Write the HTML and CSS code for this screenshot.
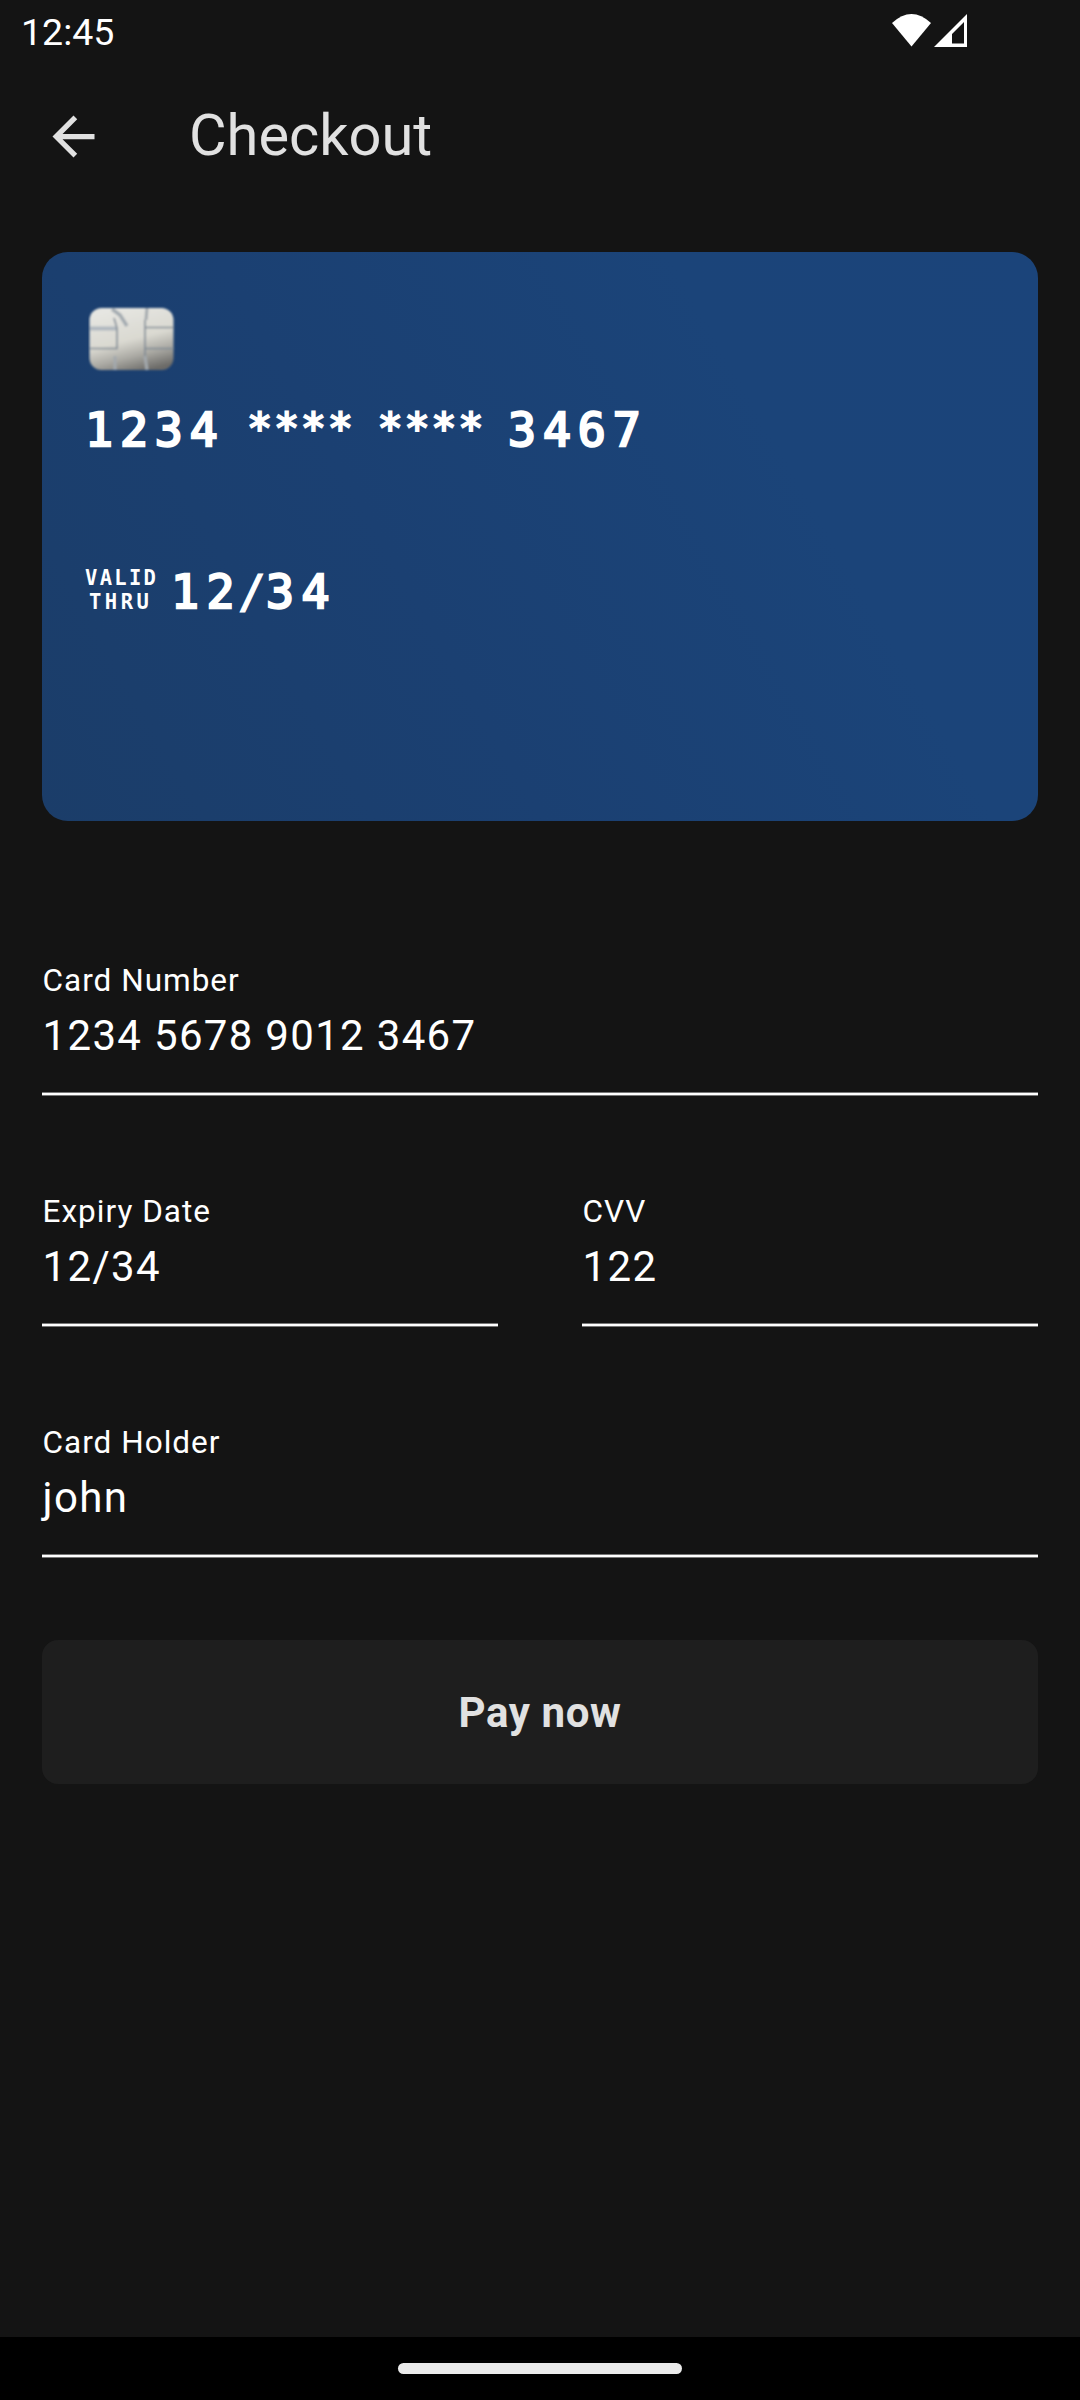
FILE: index.html
```
<!DOCTYPE html>
<html lang="en">
<head>
<meta charset="utf-8">
<title>Checkout</title>
<link rel="stylesheet" href="styles.css">
</head>
<body>
<div class="screen">
  <header class="status">
    <span class="clock">12:45</span>
    <svg class="signals" viewBox="0 0 76 34" width="76" height="34">
      <path d="M0 9Q19.5-9 39 9L19.5 32.5Z" fill="#fff"/>
      <path fill-rule="evenodd" d="M75 0V33H42ZM72 8L60 20V29.500H72Z" fill="#fff"/>
    </svg>
  </header>
  <div class="appbar">
    <svg class="back" viewBox="0 0 24 24" width="63" height="63"><path fill="#e1e1e1" d="M20 11H7.830l5.590-5.590L12 4l-8 8 8 8 1.410-1.410L7.830 13H20z"/></svg>
    <h1 class="title">Checkout</h1>
  </div>
  <main class="content">
    <section class="card">
      <svg class="chip" viewBox="0 0 88 66" width="88" height="66">
        <defs>
          <linearGradient id="metal" x1=".35" y1="0" x2=".7" y2="1">
            <stop offset="0" stop-color="#e6e6e2"/><stop offset=".5" stop-color="#dad9d1"/><stop offset=".75" stop-color="#aaa9a3"/><stop offset="1" stop-color="#6c6b68"/>
          </linearGradient>
          <filter id="soft"><feGaussianBlur stdDeviation=".9"/></filter>
        </defs>
        <g filter="url(#soft)">
          <rect x="1.500" y="2" width="84" height="62" rx="12" fill="url(#metal)"/>
          <g fill="none" stroke="#7f8a95" stroke-width="1.600">
            <path d="M2 22.500H29" stroke="#b0b8bf" stroke-width="4"/>
            <path d="M2 42.500H29V22L26 12M57 21.500H86M57 42.500H86M57 14V50"/>
            <path d="M27 50V64M59 2L58 14M57 50L59 64" stroke="#a3a9ad" stroke-width="3"/>
            <path d="M24 3L32 9L39 20" stroke="#a3aab0" stroke-width="3.500"/>
          </g>
        </g>
      </svg>
      <div class="number"><span class="digits">1234</span><span class="stars">****</span><span class="stars">****</span><span class="digits">3467</span></div>
      <div class="valid">
        <div class="thru"><span class="l1">VALID</span><span class="l2">THRU</span></div>
        <div class="date"><span>12</span><span class="slash">/</span><span>34</span></div>
      </div>
    </section>
    <form class="form">
      <div class="field"><label class="label">Card Number</label><div class="value">1234 5678 9012 3467</div></div>
      <div class="row">
        <div class="field"><label class="label">Expiry Date</label><div class="value">12/34</div></div>
        <div class="field"><label class="label">CVV</label><div class="value">122</div></div>
      </div>
      <div class="field"><label class="label">Card Holder</label><div class="value">john</div></div>
      <button type="button" class="pay">Pay now</button>
    </form>
  </main>
  <footer class="nav"><div class="pill"></div></footer>
</div>
</body>
</html>
```
FILE: styles.css
```
* { box-sizing: border-box; margin: 0; padding: 0; }
body { background: #141414; font-family: Roboto, sans-serif; color: #fff; }
.screen { width: 1080px; height: 2400px; display: flex; flex-direction: column; background: #141414; overflow: hidden; }
.status { height: 63px; padding: 14px 112px 0 21px; display: flex; justify-content: space-between; align-items: flex-start; }
.clock { margin-top: -1px; font-size: 37.500px; line-height: 38px; }
.signals { display: block; }
.appbar { height: 147px; padding: 0 42px; display: flex; align-items: center; gap: 84px; }
.back { display: block; }
.title { font-size: 57.75px; font-weight: 400; line-height: 68px; padding-bottom: 4px; color: #e1e1e1; }
.content { flex: 1; padding: 42px 42px 0; }
.card { height: 569px; border-radius: 26px; padding: 54px 43px; background: linear-gradient(60deg, #1b3d69 0%, #1b4072 38%, #1b4479 72%, #1b447a 100%); }
.chip { display: block; margin-left: 3px; }
.number { display: flex; margin-top: 36px; height: 45px; font: 46.5px/45px "DejaVu Sans Mono", monospace; -webkit-text-stroke: 2.4px #fff; white-space: pre; }
.digits { width: 162px; letter-spacing: 6.900px; }
.stars { width: 130.5px; line-height: 41px; font-size: 42px; letter-spacing: 1.600px; -webkit-text-stroke-width: 2px; }
.valid { display: flex; margin-top: 112px; height: 48px; }
.thru { width: 86px; padding-top: 1px; display: flex; flex-direction: column; font: bold 20.5px/24px "DejaVu Sans Mono", monospace; }
.l1 { letter-spacing: 2.300px; }
.l2 { letter-spacing: 3.500px; padding-left: 4px; }
.date { display: flex; font: 46.5px/55px "DejaVu Sans Mono", monospace; -webkit-text-stroke: 2.4px #fff; letter-spacing: 7.500px; }
.slash { letter-spacing: 0; margin: 0 0 0 -4px; -webkit-text-stroke-width: 1.200px; }
.form { display: flex; flex-direction: column; margin-top: 111px; }
.row { display: grid; grid-template-columns: 1fr 1fr; gap: 84px; }
.field { height: 231px; padding: 29px 0 0 .6px; background: linear-gradient(#777 0 1px, #fff 1px 3px, #777 3px 4px) 0 160px / 100% 4px no-repeat; }
.label { display: block; font-size: 31.500px; line-height: 40px; letter-spacing: 1px; }
.value { margin-top: 10px; font-size: 42px; line-height: 50px; letter-spacing: 1.310px; }
.pay { height: 144px; margin-top: 15px; padding-top: 2px; border: 0; border-radius: 16px; background: #1e1e1e; color: #e1e1e1; font: bold 42px/50px Roboto, sans-serif; letter-spacing: .6px; }
.nav { height: 63px; background: #000; display: flex; justify-content: center; padding-top: 26px; }
.pill { width: 284px; height: 11px; border-radius: 6px; background: #ebebeb; }
```
